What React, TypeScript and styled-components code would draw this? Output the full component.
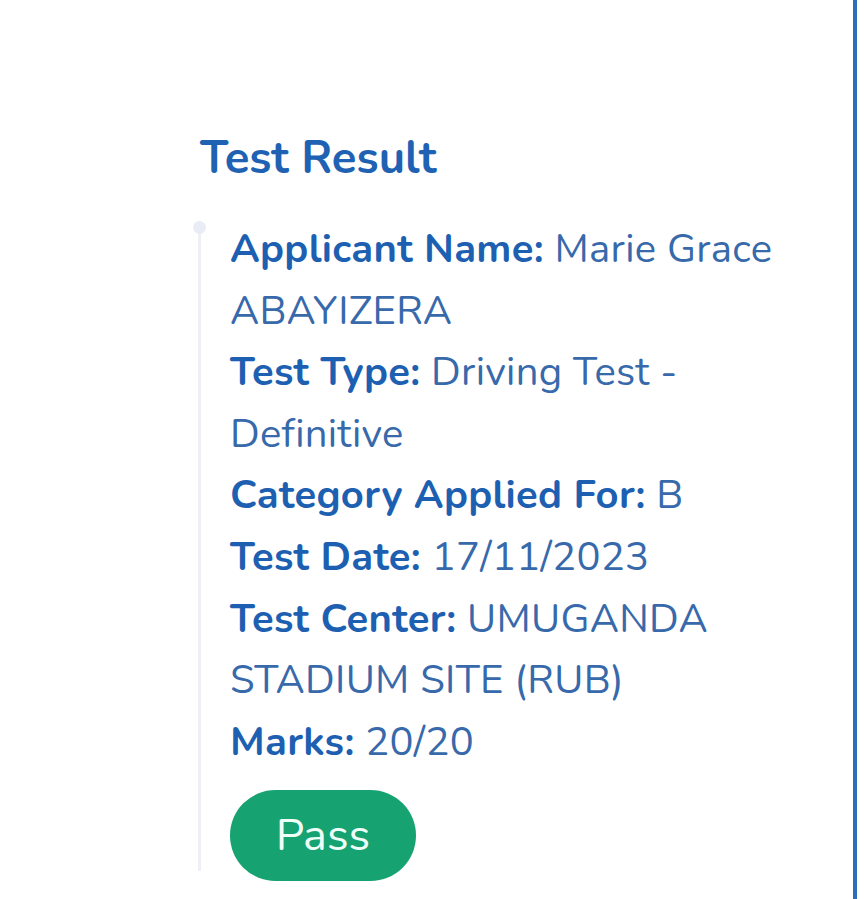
import * as React from 'react';
import styled, { createGlobalStyle } from 'styled-components';

const GlobalStyle = createGlobalStyle`
    html, body {
        margin: 0;
        padding: 0;
        background: #ffffff;
    }
    body {
        font-family: "Nunito", "Open Sans", "Liberation Sans", sans-serif;
    }
`;

interface Field {
    label: string;
    value: string;
}

const fields: Field[] = [
    { label: 'Applicant Name:', value: 'Marie Grace ABAYIZERA' },
    { label: 'Test Type:', value: 'Driving Test - Definitive' },
    { label: 'Category Applied For:', value: 'B' },
    { label: 'Test Date:', value: '17/11/2023' },
    { label: 'Test Center:', value: 'UMUGANDA STADIUM SITE (RUB)' },
    { label: 'Marks:', value: '20/20' },
];

export default function App() {
    return (
        <>
            <GlobalStyle />
            <Screen>
                <Panel>
                    <Title>Test Result</Title>
                    <Timeline>
                        <Rail>
                            <Dot />
                        </Rail>
                        <Details>
                            {fields.map((f) => (
                                <Row key={f.label}>
                                    <Label>{f.label}</Label> <Value>{f.value}</Value>
                                </Row>
                            ))}
                            <Badge>Pass</Badge>
                        </Details>
                    </Timeline>
                </Panel>
            </Screen>
        </>
    );
}

const Screen = styled.div`
    display: flex;
    width: 864px;
    height: 899px;
    overflow: hidden;
    background: #ffffff;
`;

const Panel = styled.div`
    box-sizing: border-box;
    width: 857px;
    height: 100%;
    padding: 127px 0 0 198px;
    border-right: 4px solid #2c6fb8;
`;

const Title = styled.h2`
    margin: 0 0 30px 2px;
    font-size: 45.5px;
    font-weight: 700;
    line-height: 62px;
    color: #1f62b3;
`;

const Timeline = styled.div`
    display: flex;
    gap: 29px;
`;

const Rail = styled.div`
    position: relative;
    flex: none;
    width: 3px;
    margin: 2px 0 10px;
    background: #eef0f5;
`;

const Dot = styled.span`
    position: absolute;
    top: 0;
    left: -5px;
    width: 13px;
    height: 13px;
    border-radius: 50%;
    background: #e9ecf4;
`;

const Details = styled.div`
    width: 580px;
`;

const Row = styled.div`
    font-size: 40px;
    letter-spacing: 0.3px;
    line-height: 61.6px;
`;

const Label = styled.span`
    font-weight: 700;
    color: #1d60b2;
`;

const Value = styled.span`
    font-weight: 400;
    color: #3769ab;
`;

const Badge = styled.div`
    display: inline-flex;
    align-items: center;
    justify-content: center;
    margin-top: 17px;
    width: 186px;
    height: 91px;
    border-radius: 46px;
    background: #17a271;
    color: #effff8;
    font-size: 45px;
    font-weight: 400;
`;
